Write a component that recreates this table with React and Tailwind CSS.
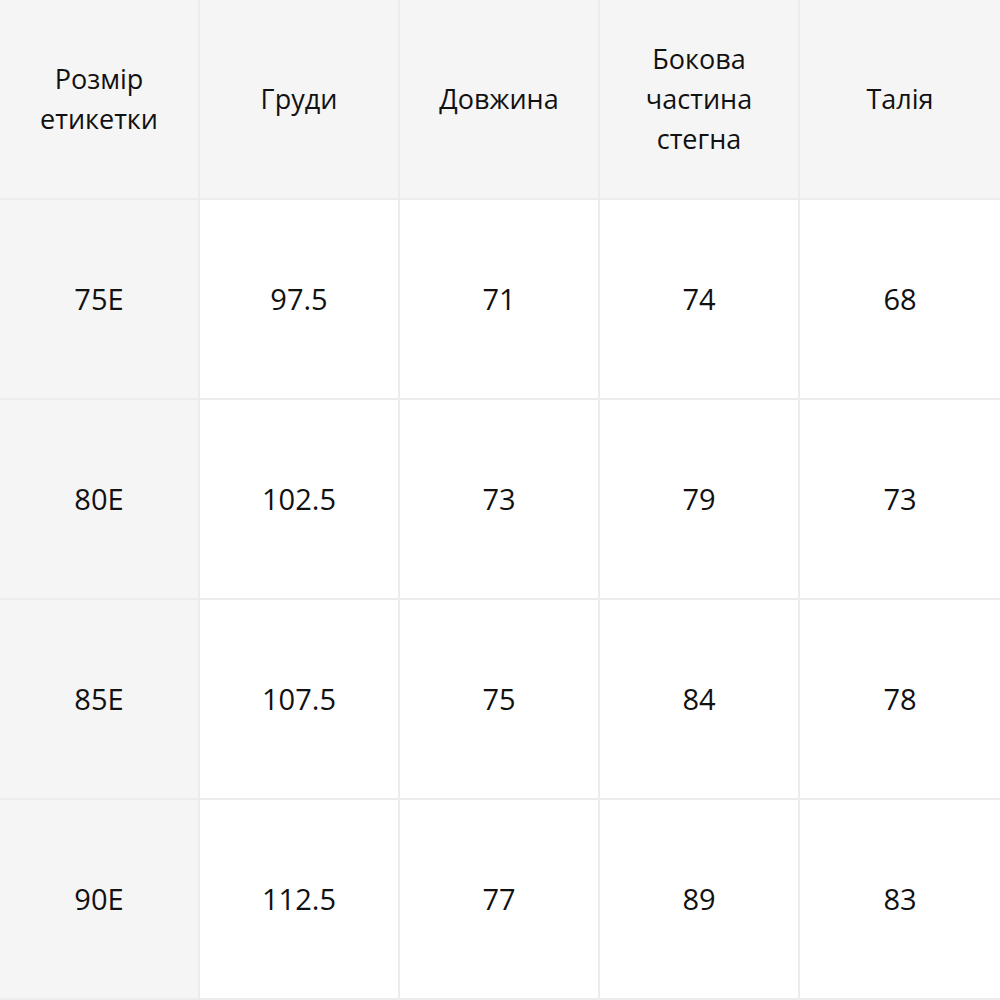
import React from "react";

const headers = ["Розмір етикетки", "Груди", "Довжина", "Бокова частина стегна", "Талія"];

const rows = [
  ["75E", "97.5", "71", "74", "68"],
  ["80E", "102.5", "73", "79", "73"],
  ["85E", "107.5", "75", "84", "78"],
  ["90E", "112.5", "77", "89", "83"],
];

const App = () => {
  return (
    <div
      className="w-[1000px] h-[1000px] bg-white text-[#111111]"
      style={{ fontFamily: '"Open Sans", "Noto Sans", sans-serif' }}
    >
      <div className="grid grid-cols-5">
        {headers.map((h, i) => (
          <div
            key={h}
            className={`h-[200px] flex items-center justify-center text-center px-6 bg-[#f5f5f5] border-b-2 border-[#ececec] text-[27px] leading-[40px] ${
              i < 4 ? "border-r-2" : ""
            }`}
          >
            {h}
          </div>
        ))}

        {rows.map((row, r) =>
          row.map((cell, c) => (
            <div
              key={r + "-" + c}
              className={`h-[200px] flex items-center justify-center text-[29px] border-b-2 border-[#ececec] ${
                c === 0 ? "bg-[#f5f5f5]" : "bg-white"
              } ${c < 4 ? "border-r-2" : ""}`}
            >
              {cell}
            </div>
          ))
        )}
      </div>
    </div>
  );
};

export default App;
